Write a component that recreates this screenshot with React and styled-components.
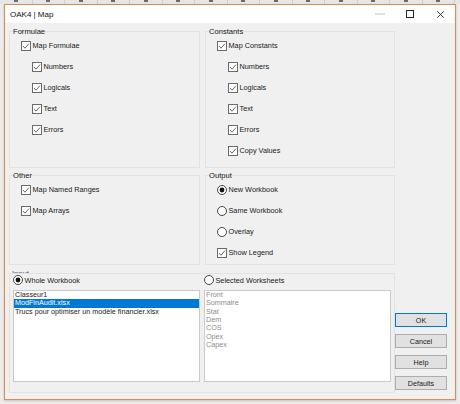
import React from "react";
import styled, { createGlobalStyle } from "styled-components";

const Global = createGlobalStyle`
  html, body { margin: 0; padding: 0; }
  body {
    width: 460px; height: 404px; overflow: hidden;
    background: #ececec;
    font-family: "Liberation Sans", Arial, sans-serif;
    color: #1a1a1a;
  }
`;

const Page = styled.div`
  width: 460px;
  height: 404px;
  display: flex;
  flex-direction: column;
`;

const SheetStrip = styled.div`
  height: 4px;
  overflow: hidden;
  background: #e6e6e6;
  display: flex;
  flex-shrink: 0;
`;

const HeaderCell = styled.div`
  width: 32.5px;
  flex-shrink: 0;
  height: 4px;
  border-right: 1px solid #cfcfcf;
  box-sizing: border-box;
  display: flex;
  justify-content: center;
`;

const HeaderMark = styled.div`
  width: 4px;
  height: 2px;
  background: #6a6a6a;
`;

const Window = styled.div`
  margin-left: 4px;
  width: 452px;
  height: 396px;
  box-sizing: border-box;
  border: 1px solid #dd8a55;
  display: flex;
  flex-direction: column;
  background: #f0f0f0;
  box-shadow: 0 1px 2px rgba(0, 0, 0, 0.18);
`;

const TitleBar = styled.div`
  height: 18px;
  background: #ffffff;
  display: flex;
  align-items: center;
  flex-shrink: 0;
`;

const TitleText = styled.div`
  flex: 1;
  padding-left: 5px;
  font-size: 8px;
  color: #111;
`;

const Control = styled.div`
  width: 30px;
  height: 18px;
  display: flex;
  align-items: center;
  justify-content: center;
`;

const Body = styled.div`
  flex: 1;
  display: grid;
  grid-template-columns: 386px 52px;
  padding: 8px 0 3px 4px;
`;

const Main = styled.div`
  display: grid;
  grid-template-columns: 191px 190px;
  column-gap: 5px;
  grid-template-rows: 137px 90px auto;
  row-gap: 7px;
`;

const Group = styled.div`
  border: 1px solid #e2e2e2;
  display: flex;
  flex-direction: column;
`;

const GroupTitle = styled.div`
  height: 6px;
  line-height: 6px;
  margin-top: -3px;
  padding-left: 3px;
  font-size: 7.6px;
  color: #1a1a1a;
`;

const Row = styled.div`
  height: 21px;
  display: flex;
  align-items: center;
  padding-left: ${(p) => (p.$sub ? 22 : 11)}px;
  font-size: 7.3px;
  gap: 1.5px;
  white-space: nowrap;
`;

const InputSection = styled.div`
  grid-column: 1 / -1;
  display: flex;
  flex-direction: column;
  margin-top: -3px;
`;

const ClippedTitle = styled.div`
  height: 4px;
  overflow: hidden;
  padding-left: 3px;
  font-size: 7.6px;
  line-height: 10px;
  color: #555;
`;

const InputBox = styled.div`
  border: 1px solid #e2e2e2;
  display: grid;
  grid-template-columns: 187px 187px;
  column-gap: 4px;
  padding: 1px 3px 10px 3px;
`;

const InputColumn = styled.div`
  display: flex;
  flex-direction: column;
  gap: 5px;
`;

const RadioRow = styled.div`
  height: 10px;
  display: flex;
  align-items: center;
  gap: 1.5px;
  font-size: 7.3px;
  white-space: nowrap;
`;

const ListBox = styled.div`
  height: 92px;
  box-sizing: border-box;
  border: 1px solid #cacaca;
  background: #ffffff;
  display: flex;
  flex-direction: column;
`;

const ListItem = styled.div`
  height: 8.35px;
  line-height: 8.35px;
  font-size: 7.2px;
  padding-left: 1px;
  white-space: nowrap;
  overflow: hidden;
  color: ${(p) => (p.$selected ? "#ffffff" : p.$disabled ? "#8c8c8c" : "#1a1a1a")};
  background: ${(p) => (p.$selected ? "#0078d7" : "transparent")};
`;

const ButtonColumn = styled.div`
  align-self: end;
  display: flex;
  flex-direction: column;
  gap: 7px;
  margin-bottom: 6px;
`;

const Button = styled.div`
  height: 14px;
  box-sizing: border-box;
  border: 1px solid ${(p) => (p.$default ? "#0078d7" : "#adadad")};
  background: #e1e1e1;
  display: flex;
  align-items: center;
  justify-content: center;
  font-size: 7.2px;
  color: #1a1a1a;
`;

const Check = () => (
  <svg width="10" height="10" viewBox="0 0 10 10" style={{ flexShrink: 0 }}>
    <rect x="0.5" y="0.5" width="9" height="9" fill="#fff" stroke="#6b6b6b" strokeWidth="1" />
    <polyline points="2,5 4,7.2 8,2.6" fill="none" stroke="#5a5a5a" strokeWidth="0.9" />
  </svg>
);

const Radio = ({ on }) => (
  <svg width="10" height="10" viewBox="0 0 10 10" style={{ flexShrink: 0 }}>
    <circle cx="5" cy="5" r="4.5" fill="#fff" stroke="#333" strokeWidth="0.9" />
    {on && <circle cx="5" cy="5" r="2.4" fill="#111" />}
  </svg>
);

const CheckRow = ({ sub, children }) => (
  <Row $sub={sub}>
    <Check />
    <span>{children}</span>
  </Row>
);

const RadioItem = ({ on, children }) => (
  <Row>
    <Radio on={on} />
    <span>{children}</span>
  </Row>
);

const columns = Array.from({ length: 15 }, (_, i) => i);

export default function App() {
  return (
    <Page>
      <Global />
      <SheetStrip>
        {columns.map((c) => (
          <HeaderCell key={c}>
            <HeaderMark />
          </HeaderCell>
        ))}
      </SheetStrip>
      <Window>
        <TitleBar>
          <TitleText>OAK4 | Map</TitleText>
          <Control>
            <svg width="10" height="2" viewBox="0 0 10 2">
              <line x1="0" y1="1" x2="10" y2="1" stroke="#c4c4c4" strokeWidth="1" />
            </svg>
          </Control>
          <Control>
            <svg width="8" height="8" viewBox="0 0 8 8">
              <rect x="0.5" y="0.5" width="7" height="7" fill="none" stroke="#222" strokeWidth="1" />
            </svg>
          </Control>
          <Control>
            <svg width="7" height="7" viewBox="0 0 7 7">
              <path d="M0.3 0.3 L6.7 6.7 M6.7 0.3 L0.3 6.7" stroke="#222" strokeWidth="0.9" />
            </svg>
          </Control>
        </TitleBar>
        <Body>
          <Main>
            <Group>
              <GroupTitle>Formulae</GroupTitle>
              <CheckRow>Map Formulae</CheckRow>
              <CheckRow sub>Numbers</CheckRow>
              <CheckRow sub>Logicals</CheckRow>
              <CheckRow sub>Text</CheckRow>
              <CheckRow sub>Errors</CheckRow>
            </Group>
            <Group>
              <GroupTitle>Constants</GroupTitle>
              <CheckRow>Map Constants</CheckRow>
              <CheckRow sub>Numbers</CheckRow>
              <CheckRow sub>Logicals</CheckRow>
              <CheckRow sub>Text</CheckRow>
              <CheckRow sub>Errors</CheckRow>
              <CheckRow sub>Copy Values</CheckRow>
            </Group>
            <Group>
              <GroupTitle>Other</GroupTitle>
              <CheckRow>Map Named Ranges</CheckRow>
              <CheckRow>Map Arrays</CheckRow>
            </Group>
            <Group>
              <GroupTitle>Output</GroupTitle>
              <RadioItem on>New Workbook</RadioItem>
              <RadioItem>Same Workbook</RadioItem>
              <RadioItem>Overlay</RadioItem>
              <CheckRow>Show Legend</CheckRow>
            </Group>
            <InputSection>
              <ClippedTitle>Input</ClippedTitle>
              <InputBox>
                <InputColumn>
                  <RadioRow>
                    <Radio on />
                    <span>Whole Workbook</span>
                  </RadioRow>
                  <ListBox>
                    <ListItem>Classeur1</ListItem>
                    <ListItem $selected>ModFinAudit.xlsx</ListItem>
                    <ListItem>Trucs pour optimiser un modèle financier.xlsx</ListItem>
                  </ListBox>
                </InputColumn>
                <InputColumn>
                  <RadioRow>
                    <Radio />
                    <span>Selected Worksheets</span>
                  </RadioRow>
                  <ListBox>
                    {["Front", "Sommaire", "Stat", "Dem", "COS", "Opex", "Capex"].map((s) => (
                      <ListItem key={s} $disabled>
                        {s}
                      </ListItem>
                    ))}
                  </ListBox>
                </InputColumn>
              </InputBox>
            </InputSection>
          </Main>
          <ButtonColumn>
            <Button $default>OK</Button>
            <Button>Cancel</Button>
            <Button>Help</Button>
            <Button>Defaults</Button>
          </ButtonColumn>
        </Body>
      </Window>
    </Page>
  );
}
